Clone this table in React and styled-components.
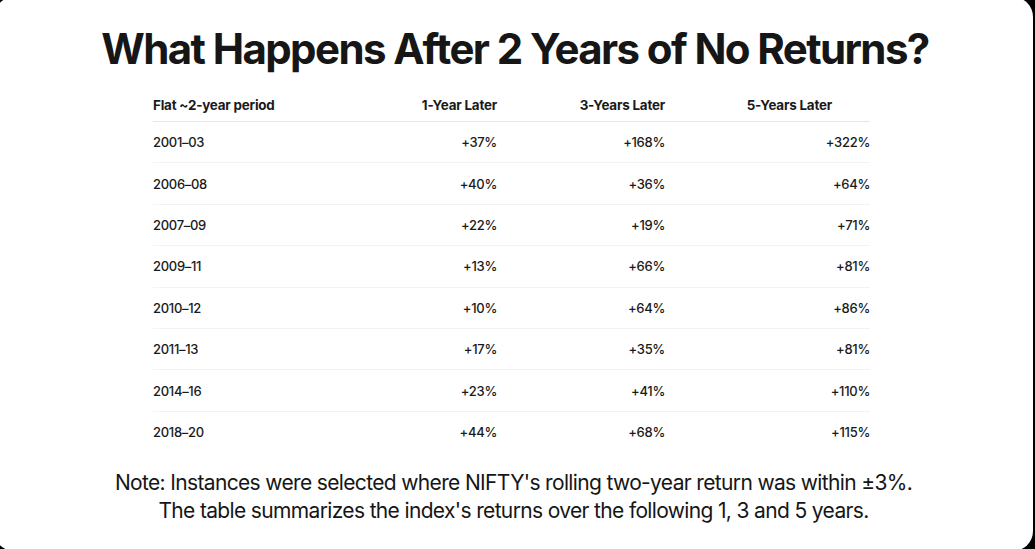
import React from "react";
import styled, { createGlobalStyle } from "styled-components";

const Global = createGlobalStyle`
  html, body { margin: 0; padding: 0; background: #000; }
  body { width: 1035px; height: 549px; overflow: hidden; font-family: Inter, "Noto Sans", sans-serif; color: #1a1a1a; }
  #root { width: 1035px; height: 549px; }
`;

const Card = styled.div`
  margin-left: -6px;
  margin-top: -3px;
  width: 1039px;
  height: 554px;
  background: #fff;
  border-radius: 20px;
  box-sizing: border-box;
  padding-top: 27px;
  display: flex;
  flex-direction: column;
  align-items: center;
`;

const Title = styled.h1`
  margin: 0 0 0 3px;
  font-size: 42px;
  line-height: 50px;
  font-weight: 700;
  letter-spacing: -1.6px;
  color: #161616;
`;

const Table = styled.div`
  margin: 15px 4px 0 0;
  width: 717px;
  display: grid;
  grid-template-columns: 187px 157px 168px 205px;
`;

const Row = styled.div`
  display: contents;
`;

const HeadCell = styled.div`
  height: 32px;
  display: flex;
  align-items: center;
  justify-content: ${(p) => (p.$left ? "flex-start" : "flex-end")};
  padding-right: ${(p) => p.$pad || 0}px;
  font-size: 13.4px;
  font-weight: 700;
  letter-spacing: -0.2px;
  border-bottom: 1px solid #e6e6e6;
`;

const Cell = styled.div`
  height: 41.4px;
  box-sizing: border-box;
  display: flex;
  align-items: center;
  justify-content: ${(p) => (p.$left ? "flex-start" : "flex-end")};
  font-size: 13px;
  font-weight: 500;
  letter-spacing: -0.3px;
  border-bottom: 1px solid ${(p) => (p.$last ? "transparent" : "#f3f3f3")};
`;

const Note = styled.p`
  margin: 16px 0 0 0;
  text-align: center;
  font-size: 21px;
  line-height: 28px;
  font-weight: 400;
  letter-spacing: -0.65px;
  color: #161616;
`;

const rows = [
  ["2001–03", "+37%", "+168%", "+322%"],
  ["2006–08", "+40%", "+36%", "+64%"],
  ["2007–09", "+22%", "+19%", "+71%"],
  ["2009–11", "+13%", "+66%", "+81%"],
  ["2010–12", "+10%", "+64%", "+86%"],
  ["2011–13", "+17%", "+35%", "+81%"],
  ["2014–16", "+23%", "+41%", "+110%"],
  ["2018–20", "+44%", "+68%", "+115%"],
];

export default function App() {
  return (
    <>
      <Global />
      <Card>
        <Title>What Happens After 2 Years of No Returns?</Title>
        <Table>
          <Row>
            <HeadCell $left>Flat ~2-year period</HeadCell>
            <HeadCell>1-Year Later</HeadCell>
            <HeadCell>3-Years Later</HeadCell>
            <HeadCell $pad={38}>5-Years Later</HeadCell>
          </Row>
          {rows.map((r, i) => (
            <Row key={r[0]}>
              {r.map((v, j) => (
                <Cell key={j} $left={j === 0} $last={i === rows.length - 1}>
                  {v}
                </Cell>
              ))}
            </Row>
          ))}
        </Table>
        <Note>
          Note: Instances were selected where NIFTY's rolling two-year return was within ±3%.
          <br />
          The table summarizes the index's returns over the following 1, 3 and 5 years.
        </Note>
      </Card>
    </>
  );
}
